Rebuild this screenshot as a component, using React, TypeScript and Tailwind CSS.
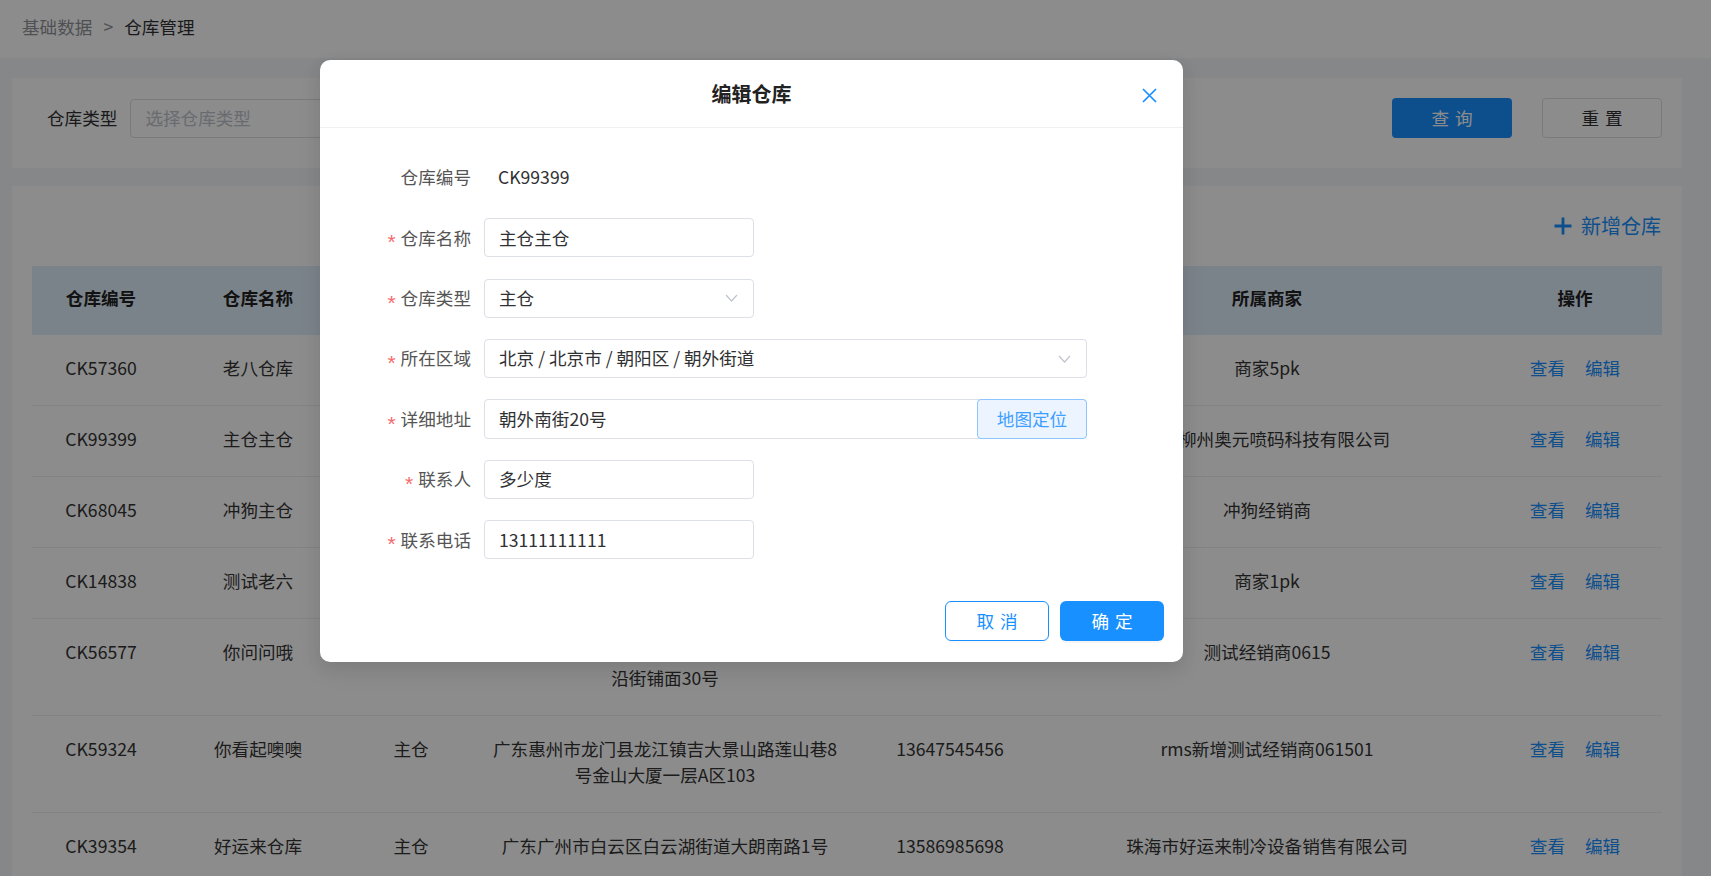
import type { ReactNode } from "react";

const rows = [
  { id: "CK57360", name: "老八仓库", type: "主仓", addr: "北京北京市朝阳区朝外南街8号", phone: "13800000008", merchant: "商家5pk" },
  { id: "CK99399", name: "主仓主仓", type: "主仓", addr: "北京北京市朝阳区朝外南街20号", phone: "13111111111", merchant: "广西柳州奥元喷码科技有限公司" },
  { id: "CK68045", name: "冲狗主仓", type: "主仓", addr: "广东广州市天河区天河路88号", phone: "13622223333", merchant: "冲狗经销商" },
  { id: "CK14838", name: "测试老六", type: "分仓", addr: "广东深圳市福田区福华路6号", phone: "13566667777", merchant: "商家1pk" },
  { id: "CK56577", name: "你问问哦", type: "主仓", addr: "广东深圳市南山区粤海街道科技南路八号楼沿街铺面30号", phone: "13788889999", merchant: "测试经销商0615" },
  { id: "CK59324", name: "你看起噢噢", type: "主仓", addr: "广东惠州市龙门县龙江镇吉大景山路莲山巷8号金山大厦一层A区103", phone: "13647545456", merchant: "rms新增测试经销商061501" },
  { id: "CK39354", name: "好运来仓库", type: "主仓", addr: "广东广州市白云区白云湖街道大朗南路1号", phone: "13586985698", merchant: "珠海市好运来制冷设备销售有限公司" },
];

function Chevron() {
  return (
    <svg width="13" height="8" viewBox="0 0 13 8" fill="none" className="shrink-0">
      <polyline points="1,1 6.5,7 12,1" stroke="#c0c4cc" strokeWidth="1.2" />
    </svg>
  );
}

function FormRow({ label, required, children }: { label: string; required?: boolean; children: ReactNode }) {
  return (
    <div className="flex h-[39px] items-center">
      <div className="flex w-[151px] items-center justify-end text-[#555]">
        {required && (
          <span className="mr-[5px] translate-y-[4px] font-['Liberation_Sans',sans-serif] text-[21px] leading-none text-[#f56c6c]">
            *
          </span>
        )}
        {label}
      </div>
      <div className="ml-[13px] flex h-full items-center">{children}</div>
    </div>
  );
}

function Field({ width, children }: { width: string; children: ReactNode }) {
  return (
    <div className={`flex h-full items-center rounded-[4px] border border-[#dcdfe6] bg-white pl-[14px] pr-[15px] text-[#303133] ${width}`}>
      {children}
    </div>
  );
}

const cell = "px-[14px] pb-[24px] pt-[20px] text-center align-top leading-[26px]";

export default function App() {
  return (
    <div className="relative h-[876px] w-full overflow-hidden bg-[#f5f6f7] font-['Noto_Sans_CJK_SC','Noto_Sans',sans-serif] text-[17.6px] text-[#333]">
      {/* breadcrumb */}
      <div className="flex h-[58px] items-center bg-white pb-[4px] pl-[22px]">
        <span className="text-[#909399]">基础数据</span>
        <span className="mx-[11px] text-[#909399]">&gt;</span>
        <span className="text-[#303133]">仓库管理</span>
      </div>

      <div className="pl-[12px] pr-[29px] pt-[20px]">
        {/* filter */}
        <div className="flex h-[90px] items-start bg-white pl-[35px] pr-[20px] pt-[20px]">
          <div className="flex h-[40px] items-center">
            <span className="mr-[13px] text-[#303133]">仓库类型</span>
            <div className="flex h-[39px] w-[300px] items-center rounded-[4px] border border-[#dcdfe6] px-[14px] text-[#c0c4cc]">
              选择仓库类型
            </div>
          </div>
          <div className="ml-auto flex gap-[30px]">
            <button className="h-[40px] w-[120px] rounded-[4px] bg-[#1890ff] pl-[0.34em] tracking-[0.34em] text-white">查询</button>
            <button className="h-[40px] w-[120px] rounded-[4px] border border-[#dcdfe6] bg-white pl-[0.34em] tracking-[0.34em] text-[#303133]">重置</button>
          </div>
        </div>

        {/* table */}
        <div className="mt-[18px] bg-white p-[20px]">
          <div className="flex h-[40px] items-center justify-end pr-px text-[20px] text-[#1890ff]">
            <svg width="18" height="18" viewBox="0 0 18 18" className="mr-[9px]">
              <path d="M9 0.5v17M0.5 9h17" stroke="#1890ff" strokeWidth="2.8" />
            </svg>
            新增仓库
          </div>
          <table className="mt-[20px] w-full table-fixed border-collapse">
            <colgroup>
              <col className="w-[138px]" />
              <col className="w-[176px]" />
              <col className="w-[130px]" />
              <col className="w-[378px]" />
              <col className="w-[192px]" />
              <col className="w-[442px]" />
              <col className="w-[174px]" />
            </colgroup>
            <thead>
              <tr className="bg-[#e1eefc]">
                {["仓库编号", "仓库名称", "仓库类型", "详细地址", "联系电话", "所属商家", "操作"].map((h) => (
                  <th key={h} className="h-[69px] px-[14px] pb-[4px] text-center align-middle font-bold text-[#222]">
                    {h}
                  </th>
                ))}
              </tr>
            </thead>
            <tbody>
              {rows.map((r) => (
                <tr key={r.id} className="border-b border-[#ebeef5]">
                  <td className={cell}>{r.id}</td>
                  <td className={cell}>{r.name}</td>
                  <td className={cell}>{r.type}</td>
                  <td className={cell}>{r.addr}</td>
                  <td className={cell}>{r.phone}</td>
                  <td className={cell}>{r.merchant}</td>
                  <td className={`${cell} text-[#1890ff]`}>
                    <span>查看</span>
                    <span className="ml-[20px]">编辑</span>
                  </td>
                </tr>
              ))}
            </tbody>
          </table>
        </div>
      </div>

      {/* mask */}
      <div className="absolute inset-0 bg-black/45" />

      {/* modal */}
      <div className="absolute left-[320px] top-[60px] w-[863px] rounded-[10px] bg-white shadow-[0_6px_16px_rgba(0,0,0,0.08),0_9px_28px_rgba(0,0,0,0.05)]">
        <div className="relative flex h-[68px] items-center justify-center border-b border-[#f0f0f0]">
          <span className="text-[20px] font-bold text-[#222]">编辑仓库</span>
          <svg width="15" height="15" viewBox="0 0 15 15" className="absolute right-[26px] top-[28px]">
            <path d="M1 1L14 14M14 1L1 14" stroke="#1890ff" strokeWidth="1.7" />
          </svg>
        </div>

        <div className="flex flex-col gap-[21.4px] pt-[30px]">
          <FormRow label="仓库编号">
            <span className="pl-[14px] text-[#303133]">CK99399</span>
          </FormRow>
          <FormRow label="仓库名称" required>
            <Field width="w-[270px]">主仓主仓</Field>
          </FormRow>
          <FormRow label="仓库类型" required>
            <Field width="w-[270px] justify-between">
              <span>主仓</span>
              <Chevron />
            </Field>
          </FormRow>
          <FormRow label="所在区域" required>
            <Field width="w-[603px] justify-between">
              <span>北京 / 北京市 / 朝阳区 / 朝外街道</span>
              <Chevron />
            </Field>
          </FormRow>
          <FormRow label="详细地址" required>
            <div className="flex h-[40px] w-[603px] items-center rounded-[4px] border border-[#dcdfe6] pl-[14px] text-[#303133]">
              <span className="flex-1">朝外南街20号</span>
              <span className="-my-px -mr-px flex h-[40px] w-[110px] items-center justify-center rounded-[4px] border border-[#8cc5ff] bg-[#ecf5ff] text-[#409eff]">
                地图定位
              </span>
            </div>
          </FormRow>
          <FormRow label="联系人" required>
            <Field width="w-[270px]">多少度</Field>
          </FormRow>
          <FormRow label="联系电话" required>
            <Field width="w-[270px]">13111111111</Field>
          </FormRow>
        </div>

        <div className="flex justify-end gap-[11px] pb-[21px] pr-[19px] pt-[42px]">
          <button className="h-[40px] w-[104px] rounded-[6px] border border-[#1890ff] bg-white pl-[0.34em] tracking-[0.34em] text-[#1890ff] shadow-[0_2px_0_rgba(0,0,0,0.02)]">
            取消
          </button>
          <button className="h-[40px] w-[104px] rounded-[6px] bg-[#1890ff] pl-[0.34em] tracking-[0.34em] text-white shadow-[0_2px_0_rgba(0,0,0,0.04)]">
            确定
          </button>
        </div>
      </div>
    </div>
  );
}
